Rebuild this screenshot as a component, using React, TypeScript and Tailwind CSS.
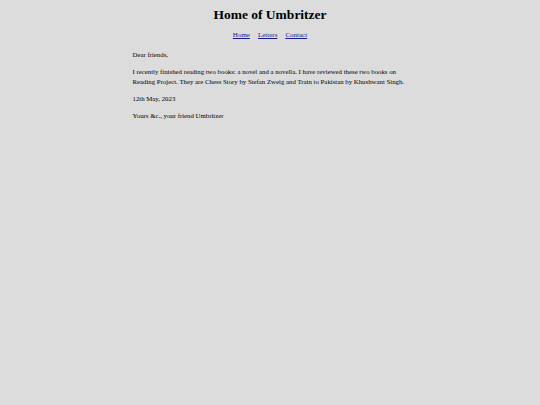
export default function App() {
  return (
    <div className="min-h-[405px] w-full bg-[#dcdcdc] text-black [font-family:'Liberation_Serif',serif]">
      <header className="pt-[7px] text-center">
        <h1 className="text-[13.5px] font-bold leading-[15px]">Home of Umbritzer</h1>
        <nav className="mt-[9px] flex justify-center gap-[8px] text-[7px] leading-[9px]">
          <a href="#" className="text-[#1a1a8c] underline">Home</a>
          <a href="#" className="text-[#1a1a8c] underline">Letters</a>
          <a href="#" className="text-[#1a1a8c] underline">Contact</a>
        </nav>
      </header>
      <main className="mx-auto mt-[10px] w-[275px] text-[6.8px] leading-[10px] flex flex-col gap-[7px]">
        <p>Dear friends,</p>
        <p>
          I recently finished reading two books: a novel and a novella. I have reviewed these two books on
          Reading Project. They are Chess Story by Stefan Zweig and Train to Pakistan by Khushwant Singh.
        </p>
        <p>12th May, 2023</p>
        <p>Yours &amp;c., your friend Umbritzer</p>
      </main>
    </div>
  );
}
